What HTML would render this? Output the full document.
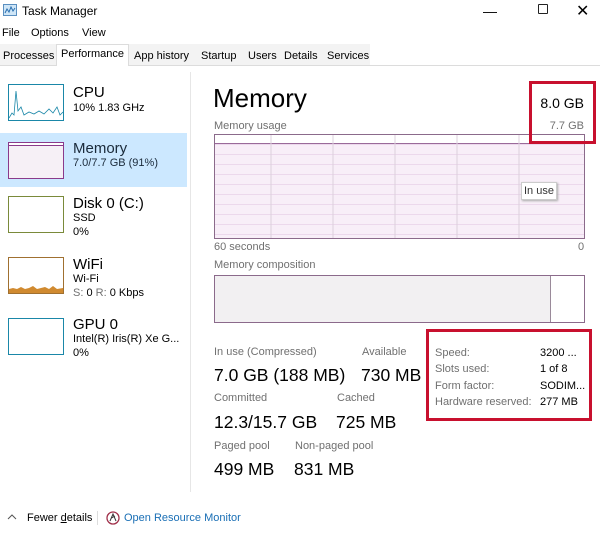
<!DOCTYPE html>
<html><head><meta charset="utf-8"><style>
*{margin:0;padding:0;box-sizing:border-box}
body{width:600px;height:539px;background:#fff;font-family:"Liberation Sans",sans-serif;color:#000;position:relative;overflow:hidden}
.a{position:absolute;white-space:nowrap}
.s11{font-size:11px}
.g{color:#707070}
.big{font-size:17.5px}
.thumb{position:absolute;left:8px;width:56px;height:37px;border:1px solid #1a87a8;background:#fff}
.tab{position:absolute;top:48px;font-size:11px}
.rb{position:absolute;border:3px solid #c8102e}
</style></head><body>
<svg class="a" style="left:3px;top:4px" width="14" height="12"><rect x="0.5" y="0.5" width="13" height="11" fill="#cfe6f7" stroke="#5a8fc0"/><path d="M2 9 L4 5 L6 8 L8 3 L10 7 L12 4" stroke="#2a6fb0" fill="none"/></svg>
<div class="a" style="left:22px;top:4px;font-size:12px">Task Manager</div>
<div class="a" style="left:483px;top:3px;font-size:14px">—</div>
<div class="a" style="left:538px;top:4px;width:10px;height:10px;border:1.3px solid #222;border-radius:1px"></div>
<div class="a" style="left:576px;top:1px;font-size:16px">✕</div>
<div class="a" style="left:2px;top:27px;font-size:11px">File</div>
<div class="a" style="left:31px;top:27px;font-size:11px">Options</div>
<div class="a" style="left:82px;top:27px;font-size:11px">View</div>
<div class="a" style="left:0;top:44px;width:370px;height:22px;background:#f3f3f3"></div>
<div class="a" style="left:0;top:65px;width:600px;height:1px;background:#dcdcdc"></div>
<div class="a" style="left:56px;top:44px;width:73px;height:22px;background:#fff;border:1px solid #dcdcdc;border-bottom:none"></div>
<div class="tab" style="left:3px;top:50px">Processes</div>
<div class="tab" style="left:61px;top:48px">Performance</div>
<div class="tab" style="left:134px;top:50px">App history</div>
<div class="tab" style="left:201px;top:50px">Startup</div>
<div class="tab" style="left:248px;top:50px">Users</div>
<div class="tab" style="left:284px;top:50px">Details</div>
<div class="tab" style="left:327px;top:50px">Services</div>

<div class="a" style="left:190px;top:72px;width:1px;height:420px;background:#e6e6e6"></div>
<div class="a" style="left:0;top:133px;width:187px;height:54px;background:#cce8ff"></div>

<div class="thumb" style="top:84px"><svg width="54" height="35"><path d="M0 33 L3 28 L5 30 L7 6 L9 26 L12 22 L15 30 L20 27 L25 29 L30 26 L35 29 L40 24 L44 28 L48 22 L51 30 L54 27" stroke="#1a87a8" fill="none" stroke-width="0.8"/></svg></div>
<div class="a" style="left:73px;top:84px;font-size:15px">CPU</div>
<div class="a s11" style="left:73px;top:102px">10% 1.83 GHz</div>

<div class="thumb" style="top:142px;border-color:#8b3a8b;background:#f6f0f6"><div style="height:3px;border-bottom:1px solid #8b3a8b;background:#fff"></div></div>
<div class="a" style="left:73px;top:140px;font-size:15px;color:#1a2a3a">Memory</div>
<div class="a s11" style="left:73px;top:157px;color:#1a2a3a">7.0/7.7 GB (91%)</div>

<div class="thumb" style="top:196px;border-color:#7a8a3a"></div>
<div class="a" style="left:73px;top:195px;font-size:15px">Disk 0 (C:)</div>
<div class="a s11" style="left:73px;top:212px">SSD</div>
<div class="a s11" style="left:73px;top:226px">0%</div>

<div class="thumb" style="top:257px;border-color:#a07030"><svg width="54" height="35"><path d="M0 35 L0 31 L4 30 L8 31 L12 29 L16 31 L20 30 L24 28 L28 31 L32 30 L36 29 L40 31 L44 28 L48 31 L54 30 L54 35Z" fill="#d08a30"/></svg></div>
<div class="a" style="left:73px;top:256px;font-size:15px">WiFi</div>
<div class="a s11" style="left:73px;top:273px">Wi-Fi</div>
<div class="a s11" style="left:73px;top:287px"><span class="g">S:</span> 0 <span class="g">R:</span> 0 Kbps</div>

<div class="thumb" style="top:318px"></div>
<div class="a" style="left:73px;top:316px;font-size:15px">GPU 0</div>
<div class="a s11" style="left:73px;top:333px">Intel(R) Iris(R) Xe G...</div>
<div class="a s11" style="left:73px;top:347px">0%</div>

<div class="a" style="left:213px;top:83px;font-size:26px">Memory</div>
<div class="a" style="left:500px;top:95px;width:84px;text-align:right;font-size:14px">8.0 GB</div>
<div class="a s11 g" style="left:214px;top:120px">Memory usage</div>
<div class="a s11 g" style="left:500px;top:120px;width:84px;text-align:right">7.7 GB</div>
<div class="a" style="left:214px;top:134px;width:371px;height:105px;border:1px solid #8b6a8b;background:repeating-linear-gradient(to bottom,#f8eef8 0,#f8eef8 9px,#ecd8ec 9px,#ecd8ec 10px)">
 <div style="height:9px;background:#fff;border-bottom:1px solid #9a6a9a"></div>
 <svg class="a" style="left:0;top:0" width="369" height="103"><g stroke="#ddd0dd"><line x1="56" y1="0" x2="56" y2="103"/><line x1="118" y1="0" x2="118" y2="103"/><line x1="180" y1="0" x2="180" y2="103"/><line x1="242" y1="0" x2="242" y2="103"/><line x1="304" y1="0" x2="304" y2="103"/></g></svg>
</div>
<div class="a s11" style="left:521px;top:182px;width:36px;height:18px;background:#fff;border:1px solid #ccc;box-shadow:1px 1px 2px #aaa;padding:2px 0 0 2px;color:#333">In use</div>
<div class="a s11 g" style="left:214px;top:241px">60 seconds</div>
<div class="a s11 g" style="left:578px;top:241px">0</div>
<div class="a s11 g" style="left:214px;top:259px">Memory composition</div>
<div class="a" style="left:214px;top:275px;width:371px;height:48px;border:1px solid #8b6a8b;background:#f2f0f2"><div style="position:absolute;left:335px;top:0;width:34px;height:46px;background:#fff;border-left:1px solid #9a8a9a"></div></div>

<div class="rb" style="left:529px;top:81px;width:67px;height:63px"></div>
<div class="rb" style="left:426px;top:329px;width:166px;height:92px"></div>

<div class="a s11 g" style="left:214px;top:346px">In use (Compressed)</div>
<div class="a big" style="left:214px;top:365px">7.0 GB (188 MB)</div>
<div class="a s11 g" style="left:362px;top:346px">Available</div>
<div class="a big" style="left:361px;top:365px">730 MB</div>
<div class="a s11 g" style="left:214px;top:392px">Committed</div>
<div class="a big" style="left:214px;top:412px">12.3/15.7 GB</div>
<div class="a s11 g" style="left:337px;top:392px">Cached</div>
<div class="a big" style="left:336px;top:412px">725 MB</div>
<div class="a s11 g" style="left:214px;top:440px">Paged pool</div>
<div class="a big" style="left:214px;top:459px">499 MB</div>
<div class="a s11 g" style="left:295px;top:440px">Non-paged pool</div>
<div class="a big" style="left:294px;top:459px">831 MB</div>

<div class="a s11 g" style="left:435px;top:347px">Speed:</div>
<div class="a s11" style="left:540px;top:347px">3200 ...</div>
<div class="a s11 g" style="left:435px;top:363px">Slots used:</div>
<div class="a s11" style="left:540px;top:363px">1 of 8</div>
<div class="a s11 g" style="left:435px;top:380px">Form factor:</div>
<div class="a s11" style="left:540px;top:380px">SODIM...</div>
<div class="a s11 g" style="left:435px;top:396px">Hardware reserved:</div>
<div class="a s11" style="left:540px;top:396px">277 MB</div>

<svg class="a" style="left:7px;top:514px" width="10" height="6"><path d="M1 5 L5 1 L9 5" stroke="#555" fill="none"/></svg>
<div class="a s11" style="left:27px;top:512px">Fewer <u>d</u>etails</div>
<div class="a" style="left:97px;top:511px;width:1px;height:14px;background:#ddd"></div>
<svg class="a" style="left:106px;top:511px" width="14" height="14"><circle cx="7" cy="7" r="6" fill="#fff" stroke="#a0304a" stroke-width="1.3"/><path d="M4 10 L7 3 L10 10 M5.5 7 L9 5" stroke="#333" fill="none" stroke-width="1"/></svg>
<div class="a s11" style="left:124px;top:512px;color:#1a6fb5">Open Resource Monitor</div>
</body></html>
